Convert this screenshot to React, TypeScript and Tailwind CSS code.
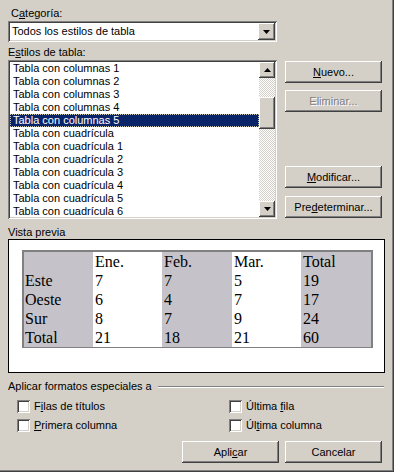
import React from "react";

const raised =
  "shadow-[inset_-1px_-1px_#404040,inset_1px_1px_#ffffff,inset_-2px_-2px_#808080,inset_2px_2px_#d4d0c8]";
const sunken =
  "shadow-[inset_1px_1px_#808080,inset_-1px_-1px_#ffffff,inset_2px_2px_#404040,inset_-2px_-2px_#d4d0c8]";

const styles = [
  "Tabla con columnas 1",
  "Tabla con columnas 2",
  "Tabla con columnas 3",
  "Tabla con columnas 4",
  "Tabla con columnas 5",
  "Tabla con cuadrícula",
  "Tabla con cuadrícula 1",
  "Tabla con cuadrícula 2",
  "Tabla con cuadrícula 3",
  "Tabla con cuadrícula 4",
  "Tabla con cuadrícula 5",
  "Tabla con cuadrícula 6",
];

const preview = [
  ["", "Ene.", "Feb.", "Mar.", "Total"],
  ["Este", "7", "7", "5", "19"],
  ["Oeste", "6", "4", "7", "17"],
  ["Sur", "8", "7", "9", "24"],
  ["Total", "21", "18", "21", "60"],
];

const Arrow = ({ up }: { up?: boolean }) => (
  <svg width="7" height="4" viewBox="0 0 7 4">
    <polygon points={up ? "3.5,0 7,4 0,4" : "0,0 7,0 3.5,4"} fill="#000" />
  </svg>
);

const Btn = ({ children, disabled }: { children: React.ReactNode; disabled?: boolean }) => (
  <div
    className={`w-[97px] h-[22px] flex items-center justify-center bg-[#d4d0c8] ${raised} ${
      disabled ? "text-[#808080] [text-shadow:1px_1px_#ffffff]" : "text-black"
    }`}
  >
    {children}
  </div>
);

const Check = ({ children }: { children: React.ReactNode }) => (
  <div className="flex items-center h-[13px]">
    <div className={`w-[13px] h-[13px] bg-white ${sunken}`} />
    <span className="ml-[4px] leading-[13px]">{children}</span>
  </div>
);

export default function App() {
  return (
    <div className="w-[394px] h-[472px] bg-[#d4d0c8] overflow-hidden font-['Liberation_Sans',sans-serif] text-[11px] text-black shadow-[inset_-1px_-1px_#404040,inset_-2px_-2px_#808080]">
      <div className="pl-[8px] flex flex-col">
        <div className="mt-[7px] h-[13px] leading-[13px] pl-[3px]">
          C<u>a</u>tegoría:
        </div>
        <div className={`mt-[1px] w-[269px] h-[21px] bg-white ${sunken} flex items-center p-[2px]`}>
          <span className="flex-1 pl-[2px]">Todos los estilos de tabla</span>
          <div className={`w-[17px] h-[17px] bg-[#d4d0c8] ${raised} flex items-center justify-center`}>
            <Arrow />
          </div>
        </div>
        <div className="mt-[4px] h-[13px] leading-[13px]">
          E<u>s</u>tilos de tabla:
        </div>
        <div className="mt-[1px] flex gap-[8px]">
          <div className={`w-[269px] h-[159px] bg-white ${sunken} p-[2px] flex`}>
            <div className="flex-1 overflow-hidden">
              {styles.map((s, i) => (
                <div
                  key={s}
                  className={`h-[13px] leading-[11px] pl-[2px] whitespace-nowrap ${
                    i === 4
                      ? "bg-[#0a246a] text-white border border-dotted border-[#c8c8b0]"
                      : "border border-transparent"
                  }`}
                >
                  {s}
                </div>
              ))}
            </div>
            <div className="w-[16px] flex flex-col">
              <div className={`h-[16px] bg-[#d4d0c8] ${raised} flex items-center justify-center`}>
                <Arrow up />
              </div>
              <div className="flex-1 bg-[image:repeating-conic-gradient(#d4d0c8_0_25%,#ffffff_0_50%)] bg-[length:2px_2px]">
                <div className={`mt-[19px] h-[32px] bg-[#d4d0c8] ${raised}`} />
              </div>
              <div className={`h-[16px] bg-[#d4d0c8] ${raised} flex items-center justify-center`}>
                <Arrow />
              </div>
            </div>
          </div>
          <div className="pt-[1px] flex flex-col">
            <Btn>
              <u>N</u>uevo...
            </Btn>
            <div className="mt-[7px]">
              <Btn disabled>Eliminar...</Btn>
            </div>
            <div className="mt-[54px]">
              <Btn>
                <u>M</u>odificar...
              </Btn>
            </div>
            <div className="mt-[8px]">
              <Btn>
                Pre<u>d</u>eterminar...
              </Btn>
            </div>
          </div>
        </div>
        <div className="mt-[7px] h-[13px] leading-[13px]">Vista previa</div>
        <div className="w-[377px] h-[134px] bg-white border border-black pl-[13px] pt-[10px]">
          <div className="w-[351px] border-2 border-[#808080] font-['Liberation_Serif',serif] text-[16px]">
            {preview.map((row, r) => (
              <div key={r} className={`grid grid-cols-[69px_69px_70px_69px_70px] ${r === 4 ? "h-[18px]" : "h-[19px]"}`}>
                {row.map((c, j) => (
                  <div
                    key={j}
                    className={`leading-[19px] ${j === 0 ? "pl-[1px]" : "pl-[2px]"} ${
                      j % 2 === 0 ? "bg-[#c5c3c9]" : "bg-white"
                    }`}
                  >
                    {c}
                  </div>
                ))}
              </div>
            ))}
          </div>
        </div>
        <div className="mt-[7px] h-[13px] w-[376px] flex items-center">
          <span className="leading-[13px]">Aplicar formatos especiales a</span>
          <div className="flex-1 ml-[6px] h-[2px] border-t border-t-[#808080] border-b border-b-white" />
        </div>
        <div className="mt-[7px] pl-[9px] grid grid-cols-[212px_1fr] gap-y-[6px]">
          <Check>
            F<u>i</u>las de títulos
          </Check>
          <Check>
            Última <u>f</u>ila
          </Check>
          <Check>
            <u>P</u>rimera columna
          </Check>
          <Check>
            Úl<u>t</u>ima columna
          </Check>
        </div>
        <div className="mt-[9px] w-[374px] flex justify-end gap-[6px]">
          <Btn>
            Apli<u>c</u>ar
          </Btn>
          <Btn>Cancelar</Btn>
        </div>
      </div>
    </div>
  );
}
